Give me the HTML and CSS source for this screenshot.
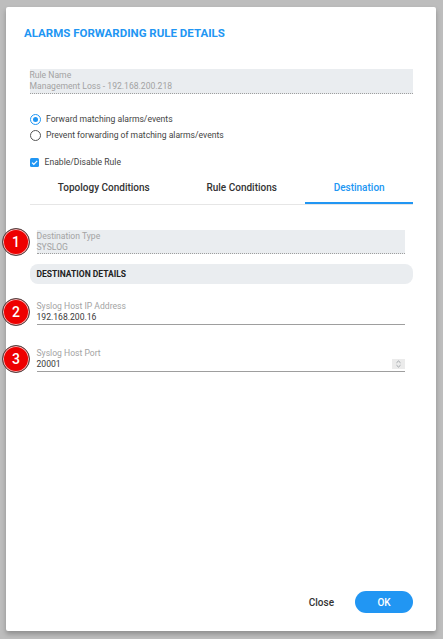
FILE: index.html
```html
<!DOCTYPE html>
<html>
<head>
<meta charset="utf-8">
<link rel="stylesheet" href="styles.css">
</head>
<body>
<div class="dialog">
  <h1 class="title">ALARMS FORWARDING RULE DETAILS</h1>
  <div class="content">
    <div class="field readonly">
      <div class="label">Rule Name</div>
      <div class="value">Management Loss - 192.168.200.218</div>
    </div>
    <div class="radios">
      <label class="radio"><span class="circle checked"></span>Forward matching alarms/events</label>
      <label class="radio"><span class="circle"></span>Prevent forwarding of matching alarms/events</label>
    </div>
    <label class="check"><span class="box"><svg width="9" height="9" viewBox="0 0 9 9"><path d="M2 4.6 L3.8 6.3 L7.2 2.8" fill="none" stroke="#fff" stroke-width="1.2"/></svg></span>Enable/Disable Rule</label>
    <div class="tabs">
      <div class="tab">Topology Conditions</div>
      <div class="tab">Rule Conditions</div>
      <div class="tab active">Destination</div>
    </div>
    <div class="dest">
      <div class="row">
        <span class="badge">1</span>
        <div class="field readonly inset">
          <div class="label">Destination Type</div>
          <div class="value">SYSLOG</div>
        </div>
      </div>
      <div class="section">DESTINATION DETAILS</div>
      <div class="row ip">
        <span class="badge">2</span>
        <div class="field input inset">
          <div class="label">Syslog Host IP Address</div>
          <div class="value">192.168.200.16</div>
        </div>
      </div>
      <div class="row port">
        <span class="badge">3</span>
        <div class="field input inset">
          <div class="label">Syslog Host Port</div>
          <div class="value">20001<span class="spin"><svg width="13" height="10" viewBox="0 0 13 10"><path d="M4.5 3.8 L6.5 2 L8.5 3.8 M4.5 6.2 L6.5 8 L8.5 6.2" fill="none" stroke="#8a9096" stroke-width="0.8"/></svg></span></div>
        </div>
      </div>
    </div>
  </div>
  <div class="footer">
    <button class="btn text">Close</button>
    <button class="btn primary">OK</button>
  </div>
</div>
</body>
</html>
```
FILE: styles.css
```css
* { box-sizing: border-box; }
html, body { margin: 0; padding: 0; }
body {
  background: #bdbdbd;
  font-family: Roboto, "Liberation Sans", sans-serif;
  width: 443px;
  height: 639px;
  overflow: hidden;
}
.dialog {
  margin: 7px 0 0 6px;
  width: 430px;
  height: 624px;
  background: #fff;
  border-radius: 2px;
  box-shadow: 0 3px 5px rgba(0,0,0,0.25);
  padding: 0 23px 0 18px;
  display: flex;
  flex-direction: column;
}
.title {
  margin: 18px 0 0;
  font-size: 11.5px;
  line-height: 16px;
  font-weight: 700;
  color: #2196f3;
}
.content {
  padding-left: 5.5px;
  margin-top: 28px;
  flex: 1;
}
.field.readonly {
  background: #eaedf0;
  border-bottom: 1px dotted #9e9e9e;
  height: 25px;
  padding: 1px 0 0 0;
}
.label {
  font-size: 8.6px;
  line-height: 10px;
  color: #a3a3a3;
}
.value {
  font-size: 8.6px;
  line-height: 12px;
  color: #a3a3a3;
  display: flex;
  justify-content: space-between;
  align-items: center;
}
.radios {
  margin-top: 19px;
  display: flex;
  flex-direction: column;
  gap: 4px;
}
.radio, .check {
  display: flex;
  align-items: center;
  font-size: 8.6px;
  color: #444;
  height: 12px;
}
.circle {
  width: 11px;
  height: 11px;
  border: 1px solid #555;
  border-radius: 50%;
  margin-right: 5.5px;
  flex: none;
  position: relative;
}
.circle.checked { border-color: #2196f3; }
.circle.checked::after {
  content: "";
  position: absolute;
  left: 2px; top: 2px;
  width: 5px; height: 5px;
  border-radius: 50%;
  background: #2196f3;
}
.check { margin-top: 15px; }
.box {
  width: 9px;
  height: 9px;
  background: #2196f3;
  border-radius: 1.5px;
  margin-right: 6px;
  display: flex;
  align-items: center;
  justify-content: center;
  flex: none;
}
.tabs {
  display: flex;
  margin-top: 8px;
  border-bottom: 1px solid #e6e6e6;
}
.tab {
  flex: 1 1 auto;
  text-align: center;
  font-size: 10px;
  font-weight: 500;
  color: #333;
  height: 28px;
  line-height: 24px;
}
.tab.active {
  color: #2196f3;
  border-bottom: 2px solid #2196f3;
  margin-bottom: -1px;
}
.dest { margin-top: 25px; }
.row {
  position: relative;
}
.inset { margin: 0 8px 0 7px; }
.badge {
  position: absolute;
  left: -27.5px;
  top: -2px;
  width: 28px;
  height: 28px;
  border-radius: 50%;
  background: #ee0000;
  border: 1.5px solid #4a4a4a;
  box-shadow: inset 0 0 0 1px #f7b5b5;
  color: #fff;
  font-size: 14px;
  font-weight: 500;
  display: flex;
  align-items: center;
  justify-content: center;
}
.row .field.readonly { height: 24px; }
.section {
  margin-top: 10px;
  height: 20px;
  background: #eaedf0;
  border-radius: 8px;
  font-size: 8.5px;
  font-weight: 700;
  color: #222;
  padding-left: 7px;
  line-height: 20px;
}
.ip { margin-top: 16px; }
.field.input {
  border-bottom: 1px solid #9e9e9e;
  height: 25px;
  padding-top: 1px;
}
.field.input .value { color: #3a3a3a; }
.port { margin-top: 22px; }
.spin {
  width: 13px;
  height: 10px;
  background: #ebebeb;
  display: flex;
}
.footer {
  height: 40px;
  display: flex;
  justify-content: flex-end;
  align-items: flex-start;
  gap: 21px;
}
.btn {
  font-family: Roboto, "Liberation Sans", sans-serif;
  border: none;
  font-size: 10px;
  font-weight: 500;
  height: 22px;
  border-radius: 11px;
  cursor: pointer;
}
.btn.text { background: none; color: #333; padding: 0; }
.btn.primary {
  background: #2196f3;
  color: #fff;
  width: 58px;
}
```
